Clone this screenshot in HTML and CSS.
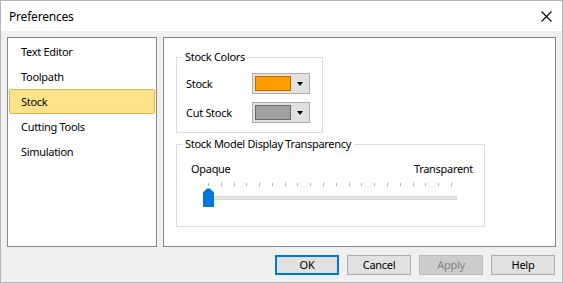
FILE: index.html
```html
<!DOCTYPE html>
<html>
<head>
<meta charset="utf-8">
<link rel="stylesheet" href="styles.css">
</head>
<body>
<div class="window">
  <div class="titlebar">
    <span class="title">Preferences</span>
    <svg class="close" width="11" height="11" viewBox="0 0 11 11"><path d="M0.5 0.5 L10.5 10.5 M10.5 0.5 L0.5 10.5" stroke="#000" stroke-width="1.1" fill="none"/></svg>
  </div>
  <div class="body">
    <div class="main">
      <div class="list">
        <div class="item">Text Editor</div>
        <div class="item">Toolpath</div>
        <div class="item selected">Stock</div>
        <div class="item">Cutting Tools</div>
        <div class="item">Simulation</div>
      </div>
      <div class="panel">
        <fieldset class="group colors">
          <legend>Stock Colors</legend>
          <div class="row">
            <span class="label">Stock</span>
            <div class="combo"><span class="swatch orange"></span><span class="arrow"></span></div>
          </div>
          <div class="row">
            <span class="label">Cut Stock</span>
            <div class="combo"><span class="swatch gray"></span><span class="arrow"></span></div>
          </div>
        </fieldset>
        <fieldset class="group transp">
          <legend>Stock Model Display Transparency</legend>
          <div class="ends"><span>Opaque</span><span>Transparent</span></div>
          <div class="slider">
            <div class="ticks">
              <i></i><i></i><i></i><i></i><i></i><i></i><i></i><i></i><i></i><i></i>
              <i></i><i></i><i></i><i></i><i></i><i></i><i></i><i></i><i></i><i></i>
            </div>
            <div class="track"></div>
            <svg class="thumb" width="11" height="19" viewBox="0 0 11 19"><polygon points="0,4.5 4,0.5 7,0.5 11,4.5 11,19 0,19" fill="#0078d7"/></svg>
          </div>
        </fieldset>
      </div>
    </div>
    <div class="buttons">
      <button class="btn default">OK</button>
      <button class="btn">Cancel</button>
      <button class="btn disabled">Apply</button>
      <button class="btn">Help</button>
    </div>
  </div>
</div>
</body>
</html>
```
FILE: styles.css
```css
html, body {
  margin: 0;
  padding: 0;
}
body {
  font-family: "Noto Sans", "Liberation Sans", sans-serif;
  font-size: 11px;
  letter-spacing: -0.3px;
  color: #000;
}
.window {
  width: 563px;
  height: 283px;
  box-sizing: border-box;
  border: 1px solid #b4b4b4;
  display: flex;
  flex-direction: column;
  overflow: hidden;
}
.titlebar {
  height: 30px;
  background: #fff;
  display: flex;
  align-items: center;
  justify-content: space-between;
  padding: 0 10px 0 8px;
  flex: none;
}
.title {
  font-size: 12px;
  letter-spacing: -0.2px;
}
.close {
  display: block;
}
.body {
  flex: 1;
  background: #f0f0f0;
  padding: 6px 6px 0 6px;
  display: flex;
  flex-direction: column;
}
.main {
  display: flex;
  gap: 6px;
  height: 210px;
}
.list {
  width: 150px;
  box-sizing: border-box;
  border: 1px solid #828790;
  background: #fff;
  padding: 1px 1px 0 1px;
}
.item {
  height: 25px;
  box-sizing: border-box;
  border: 1px solid transparent;
  border-radius: 2px;
  padding-left: 11px;
  display: flex;
  align-items: center;
}
.item.selected {
  background: #ffe38a;
  border-color: #e3b24e;
}
.panel {
  flex: 1;
  box-sizing: border-box;
  border: 1px solid #828790;
  background: #fff;
  padding: 11px 12px 0 12px;
  display: flex;
  flex-direction: column;
  align-items: flex-start;
}
.group {
  margin: 0;
  border: 1px solid #dcdcdc;
  padding: 0;
  box-sizing: border-box;
}
.group legend {
  padding: 0 3px;
  line-height: 16px;
}
.colors {
  width: 147px;
  padding: 8px 12px 9px 9px;
  display: flex;
  flex-direction: column;
  gap: 8px;
}
.colors legend {
  margin-left: -4px;
}
.row {
  display: flex;
  align-items: center;
}
.label {
  width: 66px;
}
.combo {
  width: 58px;
  height: 21px;
  box-sizing: border-box;
  border: 1px solid #adadad;
  background: #e1e1e1;
  display: flex;
  align-items: center;
  padding-left: 2px;
}
.swatch {
  width: 36px;
  height: 15px;
  box-sizing: border-box;
  border: 1px solid #6e6e6e;
}
.swatch.orange {
  background: #ff9d00;
  border-color: #b86e00;
}
.swatch.gray {
  background: #a0a0a0;
  border-color: #6a6a6a;
}
.arrow {
  width: 0;
  height: 0;
  margin-left: 6px;
  border-left: 3.5px solid transparent;
  border-right: 3.5px solid transparent;
  border-top: 4px solid #000;
}
.transp {
  width: 309px;
  height: 91px;
  margin-top: 3px;
  padding: 9px 11px 0 14px;
}
.transp legend {
  margin-left: -9px;
}
.ends {
  display: flex;
  justify-content: space-between;
  line-height: 16px;
}
.slider {
  position: relative;
  width: 254px;
  height: 25px;
  margin-top: 6px;
  margin-left: 12px;
}
.ticks {
  display: flex;
  justify-content: space-between;
  margin: 0 5px 0 5px;
  height: 3px;
}
.ticks i {
  display: block;
  width: 1px;
  height: 3px;
  background: #b0b0b0;
}
.track {
  position: absolute;
  left: 1px;
  right: 0;
  top: 13px;
  height: 4px;
  box-sizing: border-box;
  background: #e7e7e7;
  border: 1px solid #d6d6d6;
}
.thumb {
  position: absolute;
  left: 0;
  top: 5px;
  display: block;
}
.buttons {
  display: flex;
  justify-content: flex-end;
  gap: 8px;
  padding: 8px 1px 0 0;
}
.btn {
  width: 64px;
  height: 20px;
  box-sizing: border-box;
  border: 1px solid #adadad;
  background: #e1e1e1;
  font-family: inherit;
  font-size: 11px;
  letter-spacing: -0.3px;
  color: #000;
  padding: 0;
  margin: 0;
  line-height: 16px;
}
.btn.default {
  border: 2px solid #0078d7;
}
.btn.disabled {
  background: #cccccc;
  border-color: #bfbfbf;
  color: #838383;
}
```
